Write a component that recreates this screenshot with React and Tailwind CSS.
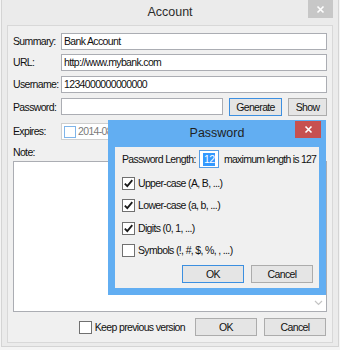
import React from "react";

function Check({ checked, className = "" }) {
  return (
    <div className={`w-[13px] h-[13px] shrink-0 border border-[#707070] bg-white flex items-center justify-center ${className}`}>
      {checked && (
        <svg width="11" height="11" viewBox="0 0 11 11">
          <path d="M1.8 5.6 L4.3 8.2 L9.3 2.2" fill="none" stroke="#1a1a1a" strokeWidth="1.8" />
        </svg>
      )}
    </div>
  );
}

function Btn({ children, className = "", blue = false }) {
  return (
    <div
      className={`h-[18px] flex items-center justify-center bg-[#e5e5e5] border ${blue ? "border-[#3c8fe0]" : "border-[#acacac]"} ${className}`}
    >
      {children}
    </div>
  );
}

function Field({ label, value, className = "" }) {
  return (
    <div className={`flex items-center h-[17px] ${className}`}>
      <div className="w-[48px] shrink-0">{label}</div>
      <div className="flex-1 h-[17px] border border-[#abadb3] bg-white flex items-center pl-[2px]">{value}</div>
    </div>
  );
}

export default function App() {
  return (
    <div className="w-[340px] h-[350px] bg-[#f4f4f4] relative overflow-hidden font-['Liberation_Sans',Arial,sans-serif] text-[10.5px] tracking-[-0.65px] text-[#111] leading-none whitespace-nowrap">
      <div className="ml-[1px] w-[338px] h-[347px] border-x border-b border-[#d4d4d4] bg-[#ebebeb] flex flex-col">
        {/* title bar */}
        <div className="h-[25px] shrink-0 grid grid-cols-[1fr_auto_1fr]">
          <div />
          <div className="text-[12.5px] tracking-normal text-[#2b2b2b] pt-[6px]">Account</div>
          <div className="flex justify-end pr-[5px]">
            <div className="w-[25px] h-[18px] bg-[#c7c7c7] flex items-center justify-center">
              <svg width="9" height="9" viewBox="0 0 9 9">
                <path d="M1.5 1.5 L7.5 7.5 M7.5 1.5 L1.5 7.5" stroke="white" strokeWidth="1.6" />
              </svg>
            </div>
          </div>
        </div>
        {/* client */}
        <div className="mx-[5px] h-[318px] border border-[#d8d8d8] bg-[#f0f0f0] flex flex-col pl-[5px] pr-[5px]">
          <Field label="Summary:" value="Bank Account" className="mt-[7px]" />
          <Field label="URL:" value="http://www.mybank.com" className="mt-[4px]" />
          <Field label="Username:" value="1234000000000000" className="mt-[5px]" />
          <div className="flex items-center h-[18px] mt-[5px]">
            <div className="w-[48px] shrink-0">Password:</div>
            <div className="w-[162px] h-[17px] border border-[#abadb3] bg-white self-start" />
            <Btn blue className="ml-[6px] w-[53px]">Generate</Btn>
            <Btn className="ml-[6px] flex-1">Show</Btn>
          </div>
          <div className="flex items-center h-[17px] mt-[7px]">
            <div className="w-[48px] shrink-0">Expires:</div>
            <div className="w-[130px] h-[17px] border border-[#cfcfcf] bg-white flex items-center pl-[2px]">
              <div className="w-[12px] h-[12px] border border-[#7fb5ea] bg-white" />
              <span className="ml-[2px] text-[#7a7a7a]">2014-08-21</span>
            </div>
          </div>
          <div className="h-[14px] mt-[5px] flex items-center">Note:</div>
          <div className="mt-[2px] h-[151px] border border-[#abadb3] bg-white flex flex-col justify-end items-end">
            <div className="w-[14px] h-[14px] flex items-center justify-center mb-[1px] mr-[1px]">
              <svg width="9" height="6" viewBox="0 0 9 6">
                <path d="M1 1 L4.5 4.5 L8 1" fill="none" stroke="#c4c4c4" strokeWidth="1.2" />
              </svg>
            </div>
          </div>
          <div className="mt-[6px] h-[18px] flex items-center justify-end pr-[1px]">
            <Check />
            <span className="ml-[3px]">Keep previous version</span>
            <Btn className="ml-[10px] w-[62px]">OK</Btn>
            <Btn className="ml-[7px] w-[62px]">Cancel</Btn>
          </div>
        </div>
      </div>

      {/* Password dialog (overlay) */}
      <div className="absolute left-[108px] top-[120px] w-[218px] h-[175px] bg-[#62aef2] flex flex-col">
        <div className="h-[27px] shrink-0 relative flex justify-center">
          <div className="text-[12.5px] tracking-normal text-[#1f1f1f] pt-[7px]">Password</div>
          <div className="absolute right-[5px] top-[1px] w-[26px] h-[17px] bg-[#c75050] flex items-center justify-center">
            <svg width="9" height="9" viewBox="0 0 9 9">
              <path d="M1.5 1.5 L7.5 7.5 M7.5 1.5 L1.5 7.5" stroke="white" strokeWidth="1.6" />
            </svg>
          </div>
        </div>
        <div className="mx-[7px] mb-[7px] flex-1 bg-[#f0f0f0] flex flex-col pl-[7px] pr-[6px]">
          <div className="mt-[3px] h-[18px] flex items-center">
            <div className="w-[77px] shrink-0">Password Length:</div>
            <div className="w-[20px] h-[18px] shrink-0 border border-[#569de5] bg-white flex items-center pl-[3px]">
              <span className="bg-[#3399ff] text-white h-[13px] flex items-center px-[1px]">12</span>
            </div>
            <span className="ml-[5px] tracking-[-0.75px]">maximum length is 127</span>
          </div>
          <div className="mt-[9px] h-[13px] flex items-center">
            <Check checked />
            <span className="ml-[3px]">Upper-case (A, B, ...)</span>
          </div>
          <div className="mt-[9px] h-[13px] flex items-center">
            <Check checked />
            <span className="ml-[3px]">Lower-case (a, b, ...)</span>
          </div>
          <div className="mt-[10px] h-[13px] flex items-center">
            <Check checked />
            <span className="ml-[3px]">Digits (0, 1, ...)</span>
          </div>
          <div className="mt-[9px] h-[13px] flex items-center">
            <Check />
            <span className="ml-[3px]">Symbols (!, #, $, %, , ...)</span>
          </div>
          <div className="mt-[8px] flex justify-end gap-[7px]">
            <Btn blue className="w-[62px]">OK</Btn>
            <Btn className="w-[62px]">Cancel</Btn>
          </div>
        </div>
      </div>
    </div>
  );
}
